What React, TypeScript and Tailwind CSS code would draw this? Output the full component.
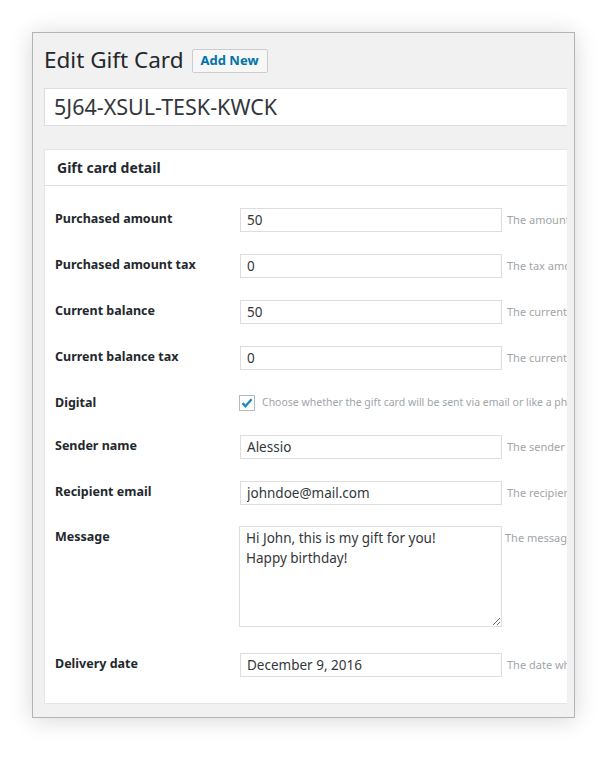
import React from "react";

type Field = {
  label: string;
  value: string;
  hint: string;
};

const topFields: Field[] = [
  { label: "Purchased amount", value: "50", hint: "The amount purchased by the customer" },
  { label: "Purchased amount tax", value: "0", hint: "The tax amount purchased by the customer" },
  { label: "Current balance", value: "50", hint: "The current balance of the gift card" },
  { label: "Current balance tax", value: "0", hint: "The current tax balance of the gift card" },
];

const font = { fontFamily: '"Noto Sans", "Open Sans", sans-serif' };

function Label({ children }: { children: React.ReactNode }) {
  return (
    <div className="w-[185px] shrink-0 pt-[1px] text-[12.5px] font-bold leading-[20px] text-[#23282d]">
      {children}
    </div>
  );
}

function Hint({ children }: { children: React.ReactNode }) {
  return (
    <span className="ml-[5px] whitespace-nowrap text-[11px] leading-[24px] text-[#a0a5aa]">
      {children}
    </span>
  );
}

function TextRow({ field }: { field: Field }) {
  return (
    <div className="flex items-start py-[11px]">
      <Label>{field.label}</Label>
      <div className="flex items-start">
        <input
          readOnly
          value={field.value}
          className="h-[24px] w-[262px] border border-[#ddd] bg-white px-[6px] text-[13.5px] text-[#32373c] outline-none"
          style={font}
        />
        <Hint>{field.hint}</Hint>
      </div>
    </div>
  );
}

export default function App() {
  return (
    <div className="min-h-[758px] bg-white pl-[32px] pt-[32px]" style={font}>
      <div className="h-[686px] w-[543px] border border-[#b4b4b4] bg-[#f1f1f1] shadow-[0_2px_22px_rgba(0,0,0,0.16)]">
        <div className="w-[534px] overflow-hidden pl-[11px]">
          <div className="w-[760px]">
            <div className="flex items-center pt-[12px]">
              <h1 className="text-[22.5px] leading-[30px] text-[#23282d]">Edit Gift Card</h1>
              <button className="ml-[8px] mt-[1px] h-[24px] rounded-[2px] border border-[#ccc] bg-[#f7f7f7] px-[8px] text-[13px] font-bold text-[#0073aa]">
                Add New
              </button>
            </div>

            <div className="mt-[13px] flex h-[38px] items-center border border-[#ddd] bg-white px-[9px] text-[21.5px] text-[#32373c]">
              5J64-XSUL-TESK-KWCK
            </div>

            <div className="mt-[23px] border border-[#e5e5e5] bg-white">
              <div className="border-b border-[#ddd] px-[12px] py-[7px] text-[14px] font-bold leading-[21px] text-[#23282d]">
                Gift card detail
              </div>
              <div className="px-[10px] pb-[15px] pt-[11px]">
                {topFields.map((f) => (
                  <TextRow key={f.label} field={f} />
                ))}

                <div className="flex h-[43px] items-center">
                  <Label>Digital</Label>
                  <div className="-ml-[1px] flex items-center">
                    <span className="flex h-[16px] w-[16px] items-center justify-center border border-[#b4b9be] bg-white">
                      <svg width="14" height="14" viewBox="0 0 14 14">
                        <path d="M2.5 7.2 L5.4 10.2 L11.6 3.2" fill="none" stroke="#1e8cbe" strokeWidth="2.4" />
                      </svg>
                    </span>
                    <span className="ml-[7px] whitespace-nowrap text-[10.5px] text-[#a0a5aa]">
                      Choose whether the gift card will be sent via email or like a physical product
                    </span>
                  </div>
                </div>

                <TextRow field={{ label: "Sender name", value: "Alessio", hint: "The sender name, if any" }} />
                <TextRow field={{ label: "Recipient email", value: "johndoe@mail.com", hint: "The recipient email address" }} />

                <div className="flex items-start pb-[15px] pt-[10px]">
                  <Label>Message</Label>
                  <div className="-ml-[1px] flex items-start">
                    <textarea
                      readOnly
                      value={"Hi John, this is my gift for you!\nHappy birthday!"}
                      className="h-[101px] w-[263px] resize border border-[#ddd] bg-white px-[6px] py-[1px] text-[13.5px] leading-[20px] text-[#32373c] outline-none"
                      style={font}
                    />
                    <span className="ml-[3px] whitespace-nowrap text-[11px] leading-[24px] text-[#a0a5aa]">
                      The message for the recipient
                    </span>
                  </div>
                </div>

                <TextRow field={{ label: "Delivery date", value: "December 9, 2016", hint: "The date when the gift card will be sent" }} />
              </div>
            </div>
          </div>
        </div>
      </div>
    </div>
  );
}
